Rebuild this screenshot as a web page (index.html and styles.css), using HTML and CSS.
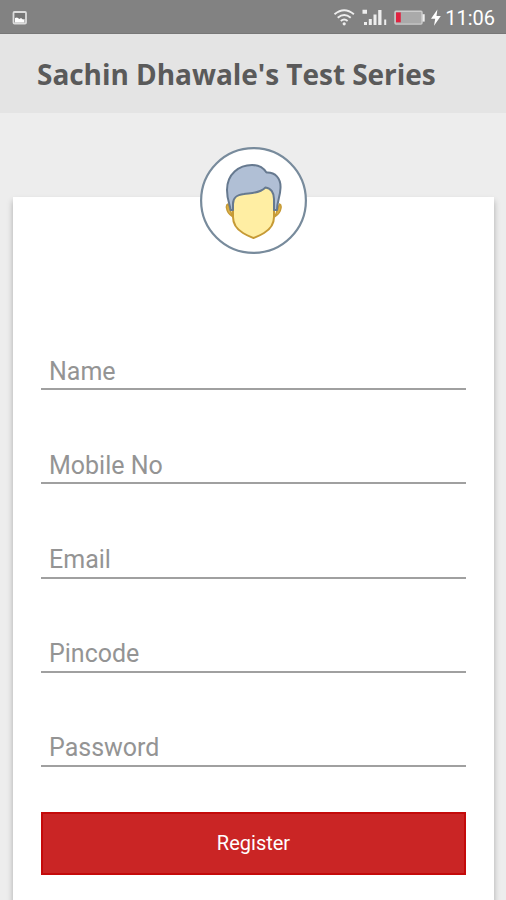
FILE: index.html
```html
<!DOCTYPE html>
<html lang="en">
	<head>
		<meta charset="utf-8" />
		<title>Sachin Dhawale's Test Series</title>
		<meta name="viewport" content="width=device-width, initial-scale=1.0">
		<link rel="stylesheet" href="styles.css">
	</head>
	<body>
		<div id="statusbar">
			<svg class="picture" width="16" height="14" viewBox="0 0 16 14">
				<rect x="1.500" y="1" width="12.500" height="11.500" rx="1" fill="#777" stroke="#dcdcdc" stroke-width="1.800" />
				<path d="M3 11.500V7l2-.5 2.500 1.500L9 7l2 1.500 1.500-.5v3.500z" fill="#fff" />
			</svg>
			<svg class="system" width="110" height="20" viewBox="331 8 110 20">
				<g fill="none" stroke="#eee" stroke-width="1.900">
					<path d="M334.500 14.300q9.700-8 19.400 0" />
					<path d="M337.700 17.700q6.500-5.400 13 0" />
					<path d="M340.800 21q3.400-2.800 6.800 0" />
				</g>
				<circle cx="344.200" cy="23.800" r="1.600" fill="#eee" />
				<path d="M362.500 9.700h4.500v4.100h-4.500zM364 22h3v3h-3zM368.800 19h3v6h-3zM373.500 14.500h3v10.500h-3zM378.200 10h3.300v15h-3.300zM384.200 19.500h2v5.500h-2z" fill="#eee" />
				<rect x="395" y="11.300" width="27" height="12.800" rx="1" fill="#aaa" stroke="#ccc" stroke-width="1.400" />
				<path d="M422.500 14.200h2.200v7.400h-2.200z" fill="#eee" />
				<path d="M396 12.400h4.800v9.900H396z" fill="#e02240" />
				<path d="M437.400 9.500L431 18.800h4.200l-1.200 7L440.800 16h-4.300z" fill="#fff" />
			</svg>
			<span class="clock">11:06</span>
		</div>
		<div id="header">
			<h1>Sachin Dhawale's Test Series</h1>
		</div>
		<form id="register">
			<div class="avatar">
				<svg width="107" height="107" viewBox="0 0 107 107">
					<circle cx="53.500" cy="53.500" r="52.400" fill="#fff" stroke="#788b9c" stroke-width="2.200" />
					<g stroke-width="2" stroke-linejoin="round">
						<path d="M28 57q-2 .5-1.500 4 1 6 6 8.500zM79.500 57q2 .5 1.500 4-1 6-6 8.500z" fill="#dbb24b" stroke="#c69a35" stroke-width="1.500" />
						<path d="M33 45v25c0 8 5 13 10 16 4 2.500 7 3.500 10.500 5 3.500-1.500 6.500-2.500 10.500-5 5-3 10-8 10-16V45l-8-6-20 4z" fill="#ffeea3" stroke="#c69a35" />
						<path d="M33 63h-2.500c0-5-3.500-9-3.500-20 0-16 12-25 25-25 6.500 0 11.500 3 14.500 7.500C75 25 81 31 80.500 41c-.3 9-3.500 13-3.500 22h-3V52c0-6-3-11-8.500-11.500C59 47 50 46 44 47c-8 1-11 4-11 10z" fill="#b0bfd5" stroke="#66798f" />
					</g>
				</svg>
			</div>
			<input type="text" placeholder="Name">
			<input type="text" placeholder="Mobile No">
			<input type="text" placeholder="Email">
			<input type="text" placeholder="Pincode">
			<input type="password" placeholder="Password">
			<button type="button" class="btn">Register</button>
		</form>
	</body>
</html>
```
FILE: styles.css
```css
* {
	box-sizing:border-box;
}
body, html {
	margin:0;
	padding:0;
	height:900px;
	overflow:hidden;
	background-color:#ededed;
	font-family:Roboto, sans-serif;
}
#statusbar {
	display:flex;
	align-items:center;
	height:34px;
	padding:0 11px 0 12px;
	background-color:#828282;
	border-bottom:1px solid #777;
	color:white;
}
.picture {
	margin-top:2px;
	margin-right:auto;
}
.system {
	margin-top:2px;
}
.clock {
	margin-left:4px;
	padding-top:3px;
	font-size:20px;
	line-height:24px;
}
#header {
	height:79px;
	padding:20px 37px 0;
	background-color:#e4e4e4;
}
h1 {
	margin:0;
	font-family:"Open Sans", sans-serif;
	font-size:28px;
	letter-spacing:-0.04px;
	line-height:40px;
	color:#5a5a5a;
	white-space:nowrap;
}
#register {
	display:flex;
	flex-direction:column;
	width:481px;
	height:740px;
	margin:84px 0 0 13px;
	padding:0 28px;
	background-color:white;
	box-shadow:0 4px 6px rgba(0,0,0,0.28);
}
.avatar {
	align-self:center;
	height:107px;
	margin:-50px 0 96.200px;
}
.avatar svg {
	display:block;
}
input {
	width:425px;
	height:40px;
	margin:0 0 54.200px;
	padding:4px 8px 0;
	border:0;
	border-bottom:2px solid #a0a0a0;
	background:none;
	font-family:Roboto, sans-serif;
	font-size:25px;
	color:#333;
	outline:none;
}
input::placeholder {
	color:#949494;
	opacity:1;
}
.btn {
	width:425px;
	height:63px;
	margin-top:-9.200px;
	border:2px solid #c40a0a;
	background-color:#ca2525;
	font-family:Roboto, sans-serif;
	font-size:20px;
	color:white;
	cursor:pointer;
}
```
